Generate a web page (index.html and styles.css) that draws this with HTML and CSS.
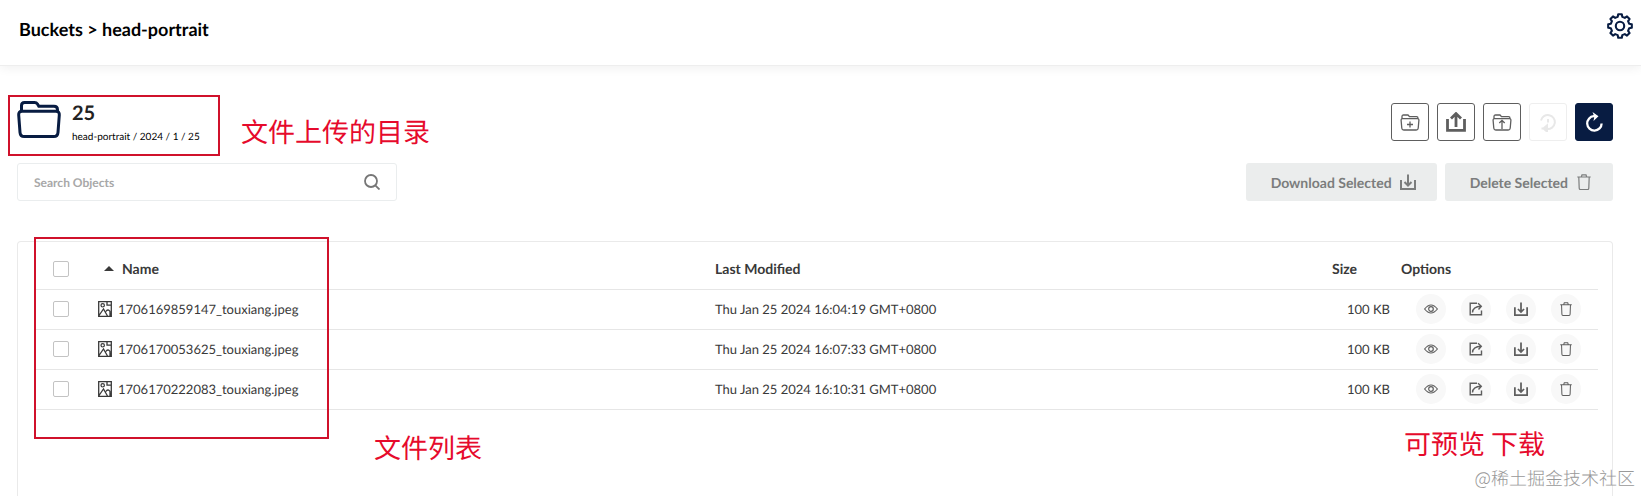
FILE: index.html
```
<!DOCTYPE html>
<html lang="en">
<head>
<meta charset="utf-8">
<title>Buckets &gt; head-portrait</title>
<link rel="stylesheet" href="styles.css">
</head>
<body>
<svg class="sprite" aria-hidden="true">
  <symbol id="download" viewBox="0 0 16 16"><path d="M1 6v9h14V6M8 .5v11M4.5 8 8 11.5 11.5 8" fill="none" stroke="currentColor" stroke-width="2"/></symbol>
  <symbol id="upload" viewBox="0 0 20 20"><path d="M1.500 7v11.300h17V7M10 15V2M5 6.600l5-5 5 5" fill="none" stroke="currentColor" stroke-width="2.800"/></symbol>
  <symbol id="trash" viewBox="0 0 14 16"><path d="M.3 3h13.4M4.3 3 5 .8h4L9.700 3M1.800 3l.4 11.200q.1 1.300 1.300 1.300h7q1.200 0 1.300-1.300L12.200 3" fill="none" stroke="currentColor" stroke-width="1.2"/></symbol>
  <symbol id="eye" viewBox="0 0 14 10"><path d="M.6 5Q7-3 13.400 5 7 13 .6 5z" fill="none" stroke="currentColor" stroke-width="1.200"/><circle cx="7" cy="5" r="2.300" fill="none" stroke="currentColor" stroke-width="1.200"/></symbol>
  <symbol id="share" viewBox="0 0 14 14"><path d="M8 1.300H1.200v11.500h11.300V8.500M3.500 10.500q.3-5.800 8.500-6.200M9 1.300l3.300 3L9.500 7.500" fill="none" stroke="currentColor" stroke-width="1.400"/></symbol>
  <symbol id="image" viewBox="0 0 14 16"><path d="M.7.700h12.600v14.600H.7zM9 .7v3.500h4.300M1 14.500l4.500-6.500 4 7M8 10.500q1-2 2.700-1.300 1.800.8 1.300 2.800v3" fill="none" stroke="currentColor" stroke-width="1.300"/><circle cx="4.700" cy="4.300" r="1.700" fill="none" stroke="currentColor" stroke-width="1.200"/></symbol>
  <symbol id="folder" viewBox="0 0 44 37"><path d="M4.500 10V4.500Q4.500 1.500 7.500 1.500h10q2 0 3 1.500l1.300 2.200H37q3.500 0 3.500 3.500v1.500M5 10.300h34q3.600 0 3.300 3.700L41 31.300q-.3 4.200-4.200 4.200H7.200q-3.900 0-4.200-4.200L1.700 14Q1.400 10.300 5 10.300z" fill="none" stroke="currentColor" stroke-width="3"/></symbol>
  <symbol id="folder-plus" viewBox="0 0 20 17"><path d="M2 5V2.500Q2 1 3.500 1H8l1.500 1.700h7q1.500 0 1.500 1.600V5M2.500 4.700h15q1.500 0 1.400 1.500l-.7 8q-.2 1.800-2 1.800H3.800q-1.800 0-2-1.800l-.7-8Q1 4.700 2.500 4.700zM10 7.500v6M7 10.500h6" fill="none" stroke="currentColor" stroke-width="1.300"/></symbol>
  <symbol id="folder-up" viewBox="0 0 20 17"><path d="M2 5V2.500Q2 1 3.500 1H8l1.500 1.700h7q1.500 0 1.500 1.600V5M2.500 4.700h15q1.500 0 1.400 1.500l-.7 8q-.2 1.800-2 1.800H3.800q-1.800 0-2-1.800l-.7-8Q1 4.700 2.500 4.700zM10 6.500V15M7.300 9 10 6.300 12.700 9" fill="none" stroke="currentColor" stroke-width="1.300"/></symbol>
</svg>

<header class="topbar">
  <h1 class="title">Buckets &gt; head-portrait</h1>
  <button class="gear" type="button" aria-label="Settings">
    <svg viewBox="0 0 26 26" width="26" height="26" fill="none" stroke="currentColor" stroke-width="2.100" stroke-linejoin="round"><path d="M10.700 3.900 11.200 1.200h3.600l.5 2.700 2.500 1 2.200-1.500 2.600 2.600-1.500 2.200 1 2.500 2.700.5v3.600l-2.700.5-1 2.500 1.500 2.200-2.600 2.600-2.200-1.500-2.500 1-.5 2.700h-3.600l-.5-2.700-2.500-1-2.200 1.500L3.400 20l1.500-2.200-1-2.500-2.700-.5v-3.600l2.700-.5 1-2.500L3.400 6 6 3.400l2.200 1.500z"/><circle cx="13" cy="13" r="4.200"/></svg>
  </button>
</header>

<main class="page">
  <section class="heading">
    <div class="location">
      <svg class="folder" width="44" height="37"><use href="#folder"/></svg>
      <div>
        <h2 class="name">25</h2>
        <nav class="crumbs" aria-label="Path">head-portrait / 2024 / 1 / 25</nav>
      </div>
    </div>
    <div class="tools">
      <button class="tool" type="button" aria-label="Create folder"><svg width="20" height="17"><use href="#folder-plus"/></svg></button>
      <button class="tool" type="button" aria-label="Upload file"><svg width="20" height="20"><use href="#upload"/></svg></button>
      <button class="tool" type="button" aria-label="Upload folder"><svg width="20" height="17"><use href="#folder-up"/></svg></button>
      <button class="tool tool-off" type="button" aria-label="Rewind" disabled><svg viewBox="0 0 18 19" width="18" height="19" fill="none" stroke="currentColor" stroke-width="2"><path d="M2 7.500a7 7 0 1 1 6 8.500M2.500 15.500h5.500M8 12.500v6L4.500 15.500zM9 6v3.500"/></svg></button>
      <button class="tool tool-main" type="button" aria-label="Refresh"><svg viewBox="0 0 18 20" width="18" height="20" fill="none" stroke="currentColor" stroke-width="2.300"><path d="M10.500 4.200H8.800a7.200 7.200 0 1 0 7.800 7.200"/><path d="M7.500 0 13.500 4.300 8.500 9l.8-4.500z" fill="currentColor" stroke="none"/></svg></button>
    </div>
  </section>

  <section class="actions">
    <div class="search">
      <input class="search-input" type="text" placeholder="Search Objects" aria-label="Search Objects">
      <svg viewBox="0 0 16 16" width="16" height="16" fill="none" stroke="currentColor" stroke-width="1.800"><circle cx="7" cy="7" r="6"/><path d="m11.300 11.300 4.200 4.200"/></svg>
    </div>
    <div class="bulk">
      <button class="bulk-button" type="button" disabled>Download Selected <svg width="16" height="16"><use href="#download"/></svg></button>
      <button class="bulk-button" type="button" disabled>Delete Selected <svg class="bin" width="14" height="16"><use href="#trash"/></svg></button>
    </div>
  </section>

  <section class="panel">
    <table class="objects">
      <thead>
        <tr>
          <th class="col-check"><input class="check" type="checkbox" aria-label="Select all"></th>
          <th class="col-name"><span class="sort"><svg viewBox="0 0 10 5" width="10" height="5"><path d="M0 5 5 0l5 5z" fill="currentColor"/></svg>Name</span></th>
          <th>Last Modified</th>
          <th class="col-size">Size</th>
          <th class="col-options">Options</th>
        </tr>
      </thead>
      <tbody>
        <tr>
          <td><input class="check" type="checkbox" aria-label="Select 1706169859147_touxiang.jpeg"></td>
          <td><span class="file"><svg width="14" height="16"><use href="#image"/></svg>1706169859147_touxiang.jpeg</span></td>
          <td>Thu Jan 25 2024 16:04:19 GMT+0800</td>
          <td class="size">100 KB</td>
          <td><div class="options">
            <button class="option" type="button" aria-label="Preview"><svg width="14" height="10"><use href="#eye"/></svg></button>
            <button class="option" type="button" aria-label="Share"><svg width="14" height="14"><use href="#share"/></svg></button>
            <button class="option" type="button" aria-label="Download"><svg width="14" height="14"><use href="#download"/></svg></button>
            <button class="option" type="button" aria-label="Delete"><svg width="12" height="14"><use href="#trash"/></svg></button>
          </div></td>
        </tr>
        <tr>
          <td><input class="check" type="checkbox" aria-label="Select 1706170053625_touxiang.jpeg"></td>
          <td><span class="file"><svg width="14" height="16"><use href="#image"/></svg>1706170053625_touxiang.jpeg</span></td>
          <td>Thu Jan 25 2024 16:07:33 GMT+0800</td>
          <td class="size">100 KB</td>
          <td><div class="options">
            <button class="option" type="button" aria-label="Preview"><svg width="14" height="10"><use href="#eye"/></svg></button>
            <button class="option" type="button" aria-label="Share"><svg width="14" height="14"><use href="#share"/></svg></button>
            <button class="option" type="button" aria-label="Download"><svg width="14" height="14"><use href="#download"/></svg></button>
            <button class="option" type="button" aria-label="Delete"><svg width="12" height="14"><use href="#trash"/></svg></button>
          </div></td>
        </tr>
        <tr>
          <td><input class="check" type="checkbox" aria-label="Select 1706170222083_touxiang.jpeg"></td>
          <td><span class="file"><svg width="14" height="16"><use href="#image"/></svg>1706170222083_touxiang.jpeg</span></td>
          <td>Thu Jan 25 2024 16:10:31 GMT+0800</td>
          <td class="size">100 KB</td>
          <td><div class="options">
            <button class="option" type="button" aria-label="Preview"><svg width="14" height="10"><use href="#eye"/></svg></button>
            <button class="option" type="button" aria-label="Share"><svg width="14" height="14"><use href="#share"/></svg></button>
            <button class="option" type="button" aria-label="Download"><svg width="14" height="14"><use href="#download"/></svg></button>
            <button class="option" type="button" aria-label="Delete"><svg width="12" height="14"><use href="#trash"/></svg></button>
          </div></td>
        </tr>
      </tbody>
    </table>
  </section>
</main>

<div class="frame frame-path"></div>
<div class="frame frame-files"></div>
<p class="note note-path" lang="zh">文件上传的目录</p>
<p class="note note-files" lang="zh">文件列表</p>
<p class="note note-options" lang="zh">可预览 下载</p>
<p class="watermark" lang="zh">@稀土掘金技术社区</p>
</body>
</html>
```
FILE: styles.css
```
* {
  box-sizing: border-box;
}

body {
  position: relative;
  display: flex;
  flex-direction: column;
  min-height: 100vh;
  margin: 0;
  background: #fff;
  color: #393939;
  font-family: Lato, "Noto Sans CJK SC", sans-serif;
  font-size: 13px;
  text-rendering: geometricPrecision;
}

h1, h2, p {
  margin: 0;
}

button {
  padding: 0;
  font-family: inherit;
}

svg {
  flex: none;
}

.sprite {
  position: absolute;
  width: 0;
  height: 0;
}

/* Top bar */
.topbar {
  display: flex;
  justify-content: space-between;
  padding: 12px 8px 12px 19px;
  height: 66px;
  border-bottom: 1px solid #eee;
  box-shadow: 0 2px 10px #f0f0f0;
}

.title {
  color: #000;
  font-size: 18px;
  line-height: 34px;
}

.gear {
  height: 30px;
  border: 0;
  background: none;
  color: #081c42;
}

/* Page */
.page {
  display: flex;
  flex: 1;
  flex-direction: column;
  padding: 35px 28px 0 17px;
}

.heading {
  display: flex;
  justify-content: space-between;
  height: 62px;
}

.location {
  display: flex;
  gap: 11px;
}

.folder {
  color: #081c42;
}

.name {
  color: #222;
  font-size: 20px;
  line-height: 24px;
}

.crumbs {
  color: #000;
  font-size: 10px;
  line-height: 24px;
}

.tools {
  display: flex;
  gap: 8px;
  padding-top: 2px;
}

.tool {
  display: flex;
  align-items: center;
  justify-content: center;
  width: 38px;
  height: 38px;
  border: 1px solid #5e5e5e;
  border-radius: 3px;
  background: #fff;
  color: #5e5e5e;
}

.tool-off {
  border-color: #eee;
  color: #e8e8e8;
}

.tool-main {
  border-color: #081c42;
  background: #081c42;
  color: #fff;
}

.actions {
  display: flex;
  justify-content: space-between;
  height: 38px;
  margin-bottom: 40px;
}

.search {
  display: flex;
  align-items: center;
  width: 380px;
  padding: 0 16px;
  border: 1px solid #eaedee;
  border-radius: 3px;
  color: #767676;
}

.search-input {
  flex: 1;
  height: 36px;
  padding: 0;
  border: 0;
  outline: 0;
  font-family: inherit;
  font-size: 12px;
  font-weight: 700;
  text-rendering: inherit;
}

.search-input::placeholder {
  color: #a8a8a8;
}

.bulk {
  display: flex;
  gap: 8px;
}

.bulk-button {
  display: flex;
  align-items: center;
  gap: 8px;
  padding: 0 21px 0 25px;
  border: 0;
  border-radius: 3px;
  background: #ebeded;
  color: #7b7d7d;
  font-size: 14px;
  font-weight: 700;
  text-rendering: inherit;
}

.bin {
  margin: 0 1px;
}

/* Objects table */
.panel {
  flex: 1;
  padding: 7px 14px 0 18px;
  border: 1px solid #eaeaea;
  border-bottom: 0;
  border-radius: 4px 4px 0 0;
}

.objects {
  width: 100%;
  border-collapse: collapse;
  table-layout: fixed;
}

.objects th,
.objects td {
  height: 40px;
  padding: 0;
  border-bottom: 1px solid #e6e6e6;
  text-align: left;
}

.objects th {
  font-size: 14px;
}

.col-check {
  width: 62px;
}

.col-size {
  width: 69px;
}

.col-options {
  width: 197px;
}

.check {
  display: block;
  width: 16px;
  height: 16px;
  margin: 0 0 0 17px;
  border: 1px solid #c3c3c3;
  border-radius: 2px;
  background: #fff;
  appearance: none;
}

.check:checked {
  background: #081c42;
}

.sort {
  display: flex;
  align-items: center;
  gap: 8px;
  padding-left: 6px;
}

.file {
  display: flex;
  align-items: center;
  gap: 6px;
}

.objects .size {
  padding-right: 11px;
  text-align: right;
}

.options {
  display: flex;
  gap: 15px;
  padding-left: 15px;
}

.option {
  display: flex;
  align-items: center;
  justify-content: center;
  width: 30px;
  height: 30px;
  border: 0;
  border-radius: 50%;
  background: #f8f8f8;
  color: #5e5e5e;
}

/* Annotations drawn over the page */
.frame {
  position: absolute;
  border: 2px solid #d0112b;
  pointer-events: none;
}

.frame-path {
  top: 95px;
  left: 8px;
  width: 212px;
  height: 61px;
}

.frame-files {
  top: 237px;
  left: 34px;
  width: 295px;
  height: 202px;
}

.note {
  position: absolute;
  color: #e60a2c;
  font-family: "Noto Sans CJK SC", sans-serif;
  font-size: 27px;
  line-height: 32px;
  white-space: nowrap;
}

.note-path {
  top: 115px;
  left: 241px;
}

.note-files {
  top: 431px;
  left: 374px;
}

.note-options {
  top: 427px;
  right: 96px;
}

.watermark {
  position: absolute;
  top: 466px;
  right: 6px;
  color: #999;
  font-family: "Noto Sans CJK SC", sans-serif;
  font-size: 18px;
  font-weight: 300;
  line-height: 24px;
}
```
